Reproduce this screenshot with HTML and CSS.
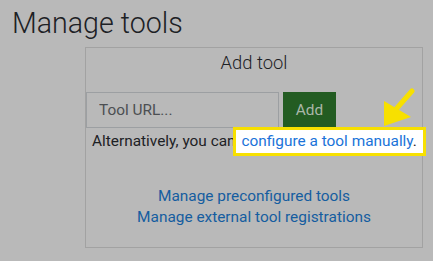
FILE: index.html
```html
<!DOCTYPE html>
<html lang="en">

<head>
    <meta charset="UTF-8">
    <meta name="viewport" content="width=device-width, initial-scale=1.0">
    <title>Manage tools</title>
    <link rel="stylesheet" href="styles.css">
</head>

<body>
    <div class="page">
        <h2 class="page-title">Manage tools</h2>

        <div class="add-tool">
            <h3>Add tool</h3>
            <div class="url-row">
                <input type="text" class="tool-url" placeholder="Tool URL...">
                <button class="add-btn">Add</button>
            </div>
            <p class="alt-text">Alternatively, you can <span class="highlight"><a href="#">configure a tool manually</a>.</span></p>
            <div class="manage-links">
                <a href="#">Manage preconfigured tools</a>
                <a href="#">Manage external tool registrations</a>
            </div>
        </div>

        <!-- Seta do tour -->
        <svg class="tour-arrow" width="50" height="50" viewBox="0 0 50 50">
            <line x1="46" y1="3" x2="31" y2="20" stroke="#f7e000" stroke-width="5" stroke-linecap="round" />
            <polygon points="18,13 45,29 18,38" fill="#f7e000" />
        </svg>
    </div>
</body>

</html>
```

FILE: styles.css
```css
/* Reset */
* {
    margin: 0;
    padding: 0;
    box-sizing: border-box;
}

body {
    font-family: 'Roboto', sans-serif;
    background-color: #b9b9b9;
    color: #1d2125;
    overflow: hidden;
}

.page {
    position: relative;
    padding: 6px 12px;
}

.page-title {
    font-size: 28.6px;
    font-weight: 300;
    line-height: 34px;
    margin-bottom: 7px;
}

/* Caixa Add tool */
.add-tool {
    margin-left: 73px;
    width: 338px;
    height: 201px;
    border: 1px solid #a2a2a2;
}

.add-tool h3 {
    font-size: 18.4px;
    font-weight: 300;
    text-align: center;
    line-height: 22px;
    margin-top: 4px;
    margin-bottom: 18px;
}

.url-row {
    display: flex;
    gap: 4px;
}

.tool-url {
    width: 193px;
    height: 36px;
    border: 1px solid #9c9fa2;
    background: #b9b9b9;
    padding: 0 12px;
    font-family: 'Roboto', sans-serif;
    font-size: 15.4px;
}

.tool-url::placeholder {
    color: #4c4f52;
}

.add-btn {
    width: 53px;
    height: 36px;
    border: none;
    background-color: #235c22;
    color: #aab7a9;
    font-family: 'Roboto', sans-serif;
    font-size: 15.4px;
}

.alt-text {
    font-size: 15.4px;
    line-height: 20px;
    padding-left: 6px;
    white-space: nowrap;
}

.highlight {
    display: inline-block;
    background: #fff;
    border: 3px solid #f7e000;
    padding: 1px 6px 2px 5px;
    margin-left: -6px;
    margin-top: -1px;
    color: #1d2125;
}

.highlight a {
    color: #1a73d9;
    text-decoration: none;
}

.manage-links {
    margin-top: 30px;
    display: flex;
    flex-direction: column;
    align-items: center;
    font-size: 15.4px;
    line-height: 21px;
}

.manage-links a {
    color: #155da0;
    text-decoration: none;
}

.tour-arrow {
    position: absolute;
    left: 366px;
    top: 88px;
}
```
